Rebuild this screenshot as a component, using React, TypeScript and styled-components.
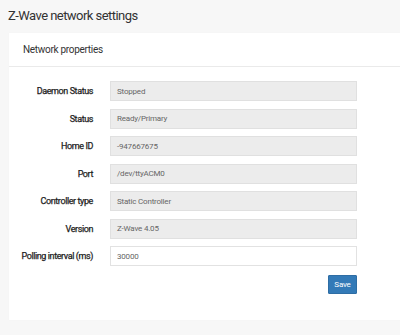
import React from 'react'
import styled, { createGlobalStyle } from 'styled-components'

const GlobalStyle = createGlobalStyle`
html, body {
    margin: 0;
    padding: 0;
    background: #f7f7f7;
    font-family: Roboto, "Liberation Sans", sans-serif;
    color: #333;
}
`

const Page = styled.div`
    width: 400px;
    height: 335px;
    overflow: hidden;
    padding-top: 7px;
    box-sizing: border-box;
`

const Title = styled.h1`
    margin: 0 0 9px 8px;
    font-size: 13px;
    font-weight: 400;
    letter-spacing: -0.55px;
    line-height: 17px;
    color: #333;
`

const Panel = styled.div`
    margin-left: 9px;
    background: #fff;
    height: 287px;
    box-shadow: 0 0 1px rgba(0, 0, 0, 0.04);
`

const PanelHeader = styled.div`
    height: 33px;
    padding-left: 14px;
    display: flex;
    align-items: center;
    font-size: 10px;
    letter-spacing: -0.3px;
    color: #333;
    border-bottom: 1px solid #eaeaea;
`

const Form = styled.div`
    display: grid;
    grid-template-columns: 84px 247px;
    column-gap: 17px;
    row-gap: 7.5px;
    padding-top: 14px;
    align-items: center;
`

const Label = styled.label`
    text-align: right;
    white-space: nowrap;
    font-size: 9px;
    font-weight: 400;
    letter-spacing: -0.4px;
    -webkit-text-stroke: 0.25px #222;
    color: #222;
`

const Field = styled.div<{ $disabled?: boolean }>`
    height: 20px;
    box-sizing: border-box;
    border: 1px solid ${({ $disabled }) => ($disabled ? '#e0e0e0' : '#e2e2e2')};
    background: ${({ $disabled }) => ($disabled ? '#ececec' : '#fff')};
    font-size: 8px;
    letter-spacing: -0.2px;
    color: #666;
    display: flex;
    align-items: center;
    padding-left: 6px;
`

const Actions = styled.div`
    width: 348px;
    display: flex;
    justify-content: flex-end;
    margin-top: 9px;
`

const SaveButton = styled.button`
    width: 29px;
    height: 19px;
    padding: 0;
    border: 1px solid #2e6da4;
    border-radius: 1px;
    background: #337ab7;
    color: #fff;
    font-family: Roboto, "Liberation Sans", sans-serif;
    font-size: 8px;
    font-weight: 400;
    letter-spacing: -0.2px;
`

const rows: { label: string, value: string, disabled: boolean }[] = [
    { label: 'Daemon Status', value: 'Stopped', disabled: true },
    { label: 'Status', value: 'Ready/Primary', disabled: true },
    { label: 'Home ID', value: '-947667675', disabled: true },
    { label: 'Port', value: '/dev/ttyACM0', disabled: true },
    { label: 'Controller type', value: 'Static Controller', disabled: true },
    { label: 'Version', value: 'Z-Wave 4.05', disabled: true },
    { label: 'Polling interval (ms)', value: '30000', disabled: false },
]

const App = () => {
    return (
        <Page>
            <GlobalStyle />
            <Title>Z-Wave network settings</Title>
            <Panel>
                <PanelHeader>Network properties</PanelHeader>
                <Form>
                    {rows.map(r => (
                        <React.Fragment key={r.label}>
                            <Label>{r.label}</Label>
                            <Field $disabled={r.disabled}>{r.value}</Field>
                        </React.Fragment>
                    ))}
                </Form>
                <Actions>
                    <SaveButton>Save</SaveButton>
                </Actions>
            </Panel>
        </Page>
    )
}

export default App
